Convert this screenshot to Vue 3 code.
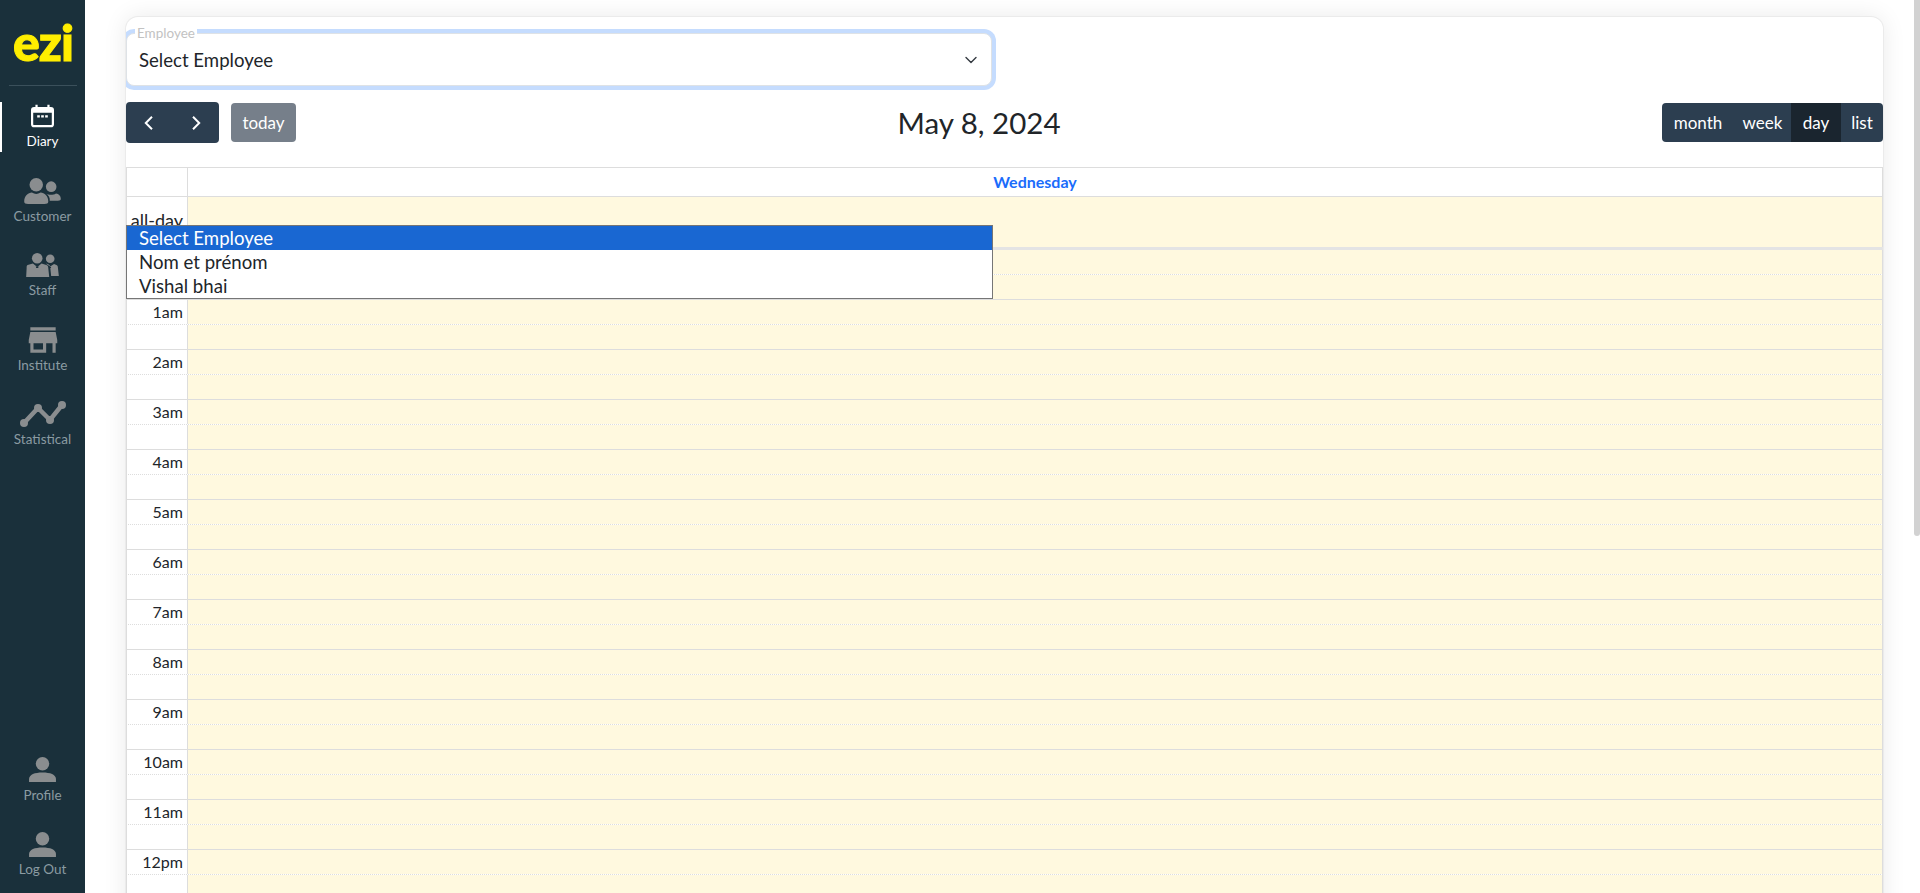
<script setup>
const hours = ['12am','1am','2am','3am','4am','5am','6am','7am','8am','9am','10am','11am','12pm']
const views = [
  { name: 'month', active: false },
  { name: 'week', active: false },
  { name: 'day', active: true },
  { name: 'list', active: false }
]
const options = ['Select Employee', 'Nom et prénom', 'Vishal bhai']
</script>

<template>
  <div class="page">
    <aside class="sidebar">
      <div class="logo">ezi</div>
      <nav class="nav">
        <a class="item active">
          <div class="ico"><svg width="23" height="24" viewBox="1 1.500 26 25.500"><path fill="#fff" d="M6 1.500h2.500V4h11V1.500H22V4h1.500A3.500 3.500 0 0 1 27 7.500v16a3.500 3.500 0 0 1-3.500 3.500h-19A3.500 3.500 0 0 1 1 23.500v-16A3.500 3.500 0 0 1 4.500 4H6zM3.500 10.500v13c0 .6.400 1 1 1h19c.6 0 1-.4 1-1v-13z"/><path fill="#fff" d="M8 13.500h3v2.500H8zM12.500 13.500h3v2.500h-3zM17 13.500h3v2.500h-3z"/></svg></div>
          <span>Diary</span>
        </a>
        <a class="item">
          <div class="ico"><svg width="37" height="26" viewBox="0 0 38 27"><g fill="#8a8d8f"><circle cx="12.500" cy="7" r="7"/><path d="M0 24.500c0-6 4-9 8-9.500 3 2 6 2 9 0 4 .5 8 3.500 8 9.500 0 2-1.500 2.500-4 2.500H4c-2.500 0-4-.5-4-2.500z"/><circle cx="28" cy="9" r="5.500"/><path d="M22.500 16c3 2 7.500 2 10.500 0 3 .5 5 2.500 5 5.500 0 1.500-1 2-3 2h-8.500c.5-3-1-5.500-4-7.500z"/></g></svg></div>
          <span>Customer</span>
        </a>
        <a class="item">
          <div class="ico"><svg width="33" height="25" viewBox="0 0 34 26"><g fill="#8a8d8f"><circle cx="11.500" cy="5.500" r="5.500"/><path d="M1.500 12.500 7 11l4.500 3.500L16 11l5 1.500c1.500.5 2 1.500 2 3L24 25H0l.500-9.500c0-1.500 0-2.500 1-3z"/><circle cx="25" cy="6" r="4.500"/><path d="M21 11.500l4 2.500 4-2.500 2.500 1c1.200.5 1.500 1.500 1.500 2.500l1 9H26l-1-9.500c-.2-1.500-1-2.500-4-3.500z"/></g><path fill="#1a303b" d="M10 14h3l-.5 1.500h-2zM24 14.500h2l-.5 1h-1z"/></svg></div>
          <span>Staff</span>
        </a>
        <a class="item">
          <div class="ico"><svg width="38" height="38" viewBox="0 0 24 24"><path fill="#8a8d8f" d="M20 4H4v2h16V4zm1 10v-2l-1-5H4l-1 5v2h1v6h10v-6h4v6h2v-6h1zm-9 4H6v-4h6v4z"/></svg></div>
          <span>Institute</span>
        </a>
        <a class="item">
          <div class="ico"><svg width="46" height="28" viewBox="0 0 46 28"><path d="M4 23 18 8l12 12L42 5" fill="none" stroke="#8a8d8f" stroke-width="4.500"/><g fill="#8a8d8f"><circle cx="4" cy="23" r="4"/><circle cx="18" cy="8" r="4"/><circle cx="30" cy="20" r="4"/><circle cx="42" cy="5" r="4"/></g></svg></div>
          <span>Statistical</span>
        </a>
        <div class="spacer"></div>
        <a class="item">
          <div class="ico"><svg width="27" height="25" viewBox="0 0 28 26"><g fill="#8a8d8f"><circle cx="14" cy="7" r="7"/><path d="M0 26v-3c0-5 6-7 14-7s14 2 14 7v3z"/></g></svg></div>
          <span>Profile</span>
        </a>
        <a class="item">
          <div class="ico"><svg width="27" height="25" viewBox="0 0 28 26"><g fill="#8a8d8f"><circle cx="14" cy="7" r="7"/><path d="M0 26v-3c0-5 6-7 14-7s14 2 14 7v3z"/></g></svg></div>
          <span>Log Out</span>
        </a>
      </nav>
    </aside>

    <main class="main">
      <section class="card">
        <div class="select">
          <span class="legend">Employee</span>
          <span class="value">Select Employee</span>
          <svg width="16" height="16" viewBox="0 0 16 16"><path d="m3 5.500 5 5 5-5" fill="none" stroke="#343a40" stroke-width="1.400" stroke-linecap="round" stroke-linejoin="round"/></svg>
        </div>

        <div class="dropdown">
          <div v-for="(o, i) in options" :key="o" class="option" :class="{ selected: i === 0 }">{{ o }}</div>
        </div>

        <div class="toolbar">
          <div class="group nav-group">
            <button class="btn chev"><svg width="16" height="16" viewBox="0 0 16 16"><path d="M11 1.800 4.800 8l6.200 6.200" fill="none" stroke="#fff" stroke-width="2"/></svg></button>
            <button class="btn chev"><svg width="16" height="16" viewBox="0 0 16 16"><path d="M5 1.800 11.200 8 5 14.200" fill="none" stroke="#fff" stroke-width="2"/></svg></button>
          </div>
          <button class="today">today</button>
          <h2 class="title">May 8, 2024</h2>
          <div class="group views">
            <button v-for="v in views" :key="v.name" class="btn" :class="{ on: v.active }">{{ v.name }}</button>
          </div>
        </div>

        <div class="grid">
          <div class="row head">
            <div class="axis"></div>
            <div class="lane dayname">Wednesday</div>
          </div>
          <div class="row allday">
            <div class="axis">all-day</div>
            <div class="lane tint"></div>
          </div>
          <div class="divider"></div>
          <template v-for="h in hours" :key="h">
            <div class="row slot dotted">
              <div class="axis">{{ h }}</div>
              <div class="lane tint"></div>
            </div>
            <div class="row slot">
              <div class="axis"></div>
              <div class="lane tint"></div>
            </div>
          </template>
        </div>
      </section>
    </main>

    <div class="thumb"></div>
  </div>
</template>

<style>
html, body { margin: 0; height: 100%; overflow: hidden; background: #fff; }
</style>

<style scoped>
.page {
  display: flex;
  height: 893px;
  overflow: hidden;
  font-family: "Lato", "Noto Sans", sans-serif;
  color: #212529;
}
.sidebar {
  width: 85px;
  flex: none;
  background: #1a303b;
  display: flex;
  flex-direction: column;
  align-items: stretch;
}
.logo {
  box-sizing: border-box;
  height: 86px;
  margin: 0 8px 0 9px;
  padding-top: 9px;
  border-bottom: 1px solid #3b505b;
  text-align: center;
  font-weight: 900;
  font-size: 50px;
  line-height: 66px;
  letter-spacing: -1px;
  color: #ffee00;
  -webkit-text-stroke: 1px #ffee00;
}
.nav {
  flex: 1;
  display: flex;
  flex-direction: column;
  padding-top: 15px;
  padding-bottom: 16px;
}
.item {
  flex: none;
  height: 48px;
  display: flex;
  flex-direction: column;
  align-items: center;
  color: #8b9ba2;
  font-size: 13.500px;
  line-height: 16px;
  position: relative;
}
.item + .item { margin-top: 26.500px; }
.ico {
  height: 30px;
  flex: none;
  margin-bottom: 2px;
  display: flex;
  align-items: center;
  justify-content: center;
}
.ico svg { flex: none; }
.item.active { color: #fff; }
.item.active::before {
  content: "";
  position: absolute;
  left: 0;
  top: 1px;
  width: 2px;
  height: 50px;
  background: #fff;
}
.spacer { flex: 1; }

.main {
  flex: 1;
  min-width: 0;
  padding: 17px 37px 0 41px;
}
.card {
  position: relative;
  background: #fff;
  border-radius: 12px 12px 0 0;
  box-shadow: 0 0 0 1px #ebebeb, 0 0 24px rgba(0, 0, 0, 0.09);
  padding-top: 16px;
  height: 900px;
  overflow: hidden;
}
.select {
  position: relative;
  width: 866px;
  height: 53px;
  box-sizing: border-box;
  border: 1px solid #dee2e6;
  border-radius: 8px;
  box-shadow: 0 0 0 4px #c5dcfe;
  display: flex;
  align-items: center;
  justify-content: space-between;
  padding: 0 12px 0 12px;
  background: #fff;
  font-size: 18.600px;
}
.legend {
  position: absolute;
  left: 8px;
  top: -8px;
  padding: 0 2px;
  background: #fff;
  font-size: 13.500px;
  line-height: 14px;
  color: #c2c2c2;
}
.dropdown {
  position: absolute;
  left: 0;
  top: 208px;
  width: 867px;
  box-sizing: border-box;
  border: 1px solid #767676;
  background: #fff;
  z-index: 3;
  font-size: 18.600px;
}
.option {
  height: 24px;
  line-height: 24px;
  padding-left: 12px;
}
.option.selected { background: #1967d2; color: #fff; }

.toolbar {
  display: flex;
  align-items: center;
  height: 41px;
  margin-top: 16px;
  margin-bottom: 24px;
}
.group { display: flex; border-radius: 4px; overflow: hidden; }
.btn {
  border: 0;
  background: #2c3e50;
  color: #fff;
  font: inherit;
  font-size: 17px;
  padding: 0;
  height: 100%;
}
.btn.on { background: #1a252f; }
.nav-group { height: 41px; width: 93px; }
.chev { flex: 1; display: flex; align-items: center; justify-content: center; }
.today {
  width: 65px;
  height: 39px;
  margin-left: 12px;
  border: 0;
  border-radius: 4px;
  background: #767f8a;
  color: #fff;
  font: inherit;
  font-size: 17px;
  padding: 0;
}
.title {
  flex: 1;
  margin: 0;
  text-align: center;
  font-weight: 400;
  font-size: 29.500px;
  line-height: 38px;
  color: #212529;
}
.views { height: 39px; }
.views .btn:nth-child(1) { width: 72px; }
.views .btn:nth-child(2) { width: 57px; }
.views .btn:nth-child(3) { width: 50px; }
.views .btn:nth-child(4) { width: 42px; }

.grid { border-top: 1px solid #ddd; }
.row { display: flex; }
.axis {
  width: 62px;
  flex: none;
  box-sizing: border-box;
  border-left: 1px solid #ddd;
  border-right: 1px solid #ddd;
  padding-right: 4px;
  text-align: right;
  font-size: 16px;
  line-height: 23px;
  white-space: nowrap;
}
.lane { flex: 1; border-right: 1px solid #ddd; }
.head { height: 29px; border-bottom: 1px solid #ddd; box-sizing: border-box; }
.dayname {
  text-align: center;
  line-height: 28px;
  font-size: 16px;
  font-weight: 700;
  color: #1a6cfb;
}
.allday { height: 50px; }
.allday .axis { padding-top: 12px; font-size: 18px; }
.tint { background: #fff9df; }
.divider { height: 3px; background: #e4e4e4; }
.slot { height: 25px; box-sizing: border-box; border-bottom: 1px solid #ddd; }
.slot.dotted { border-bottom: 1px dotted #ddd; }

.thumb {
  position: fixed;
  top: 0;
  right: 0;
  width: 6px;
  height: 536px;
  border-radius: 0 0 3px 3px;
  background: #d2d2d2;
}
</style>
